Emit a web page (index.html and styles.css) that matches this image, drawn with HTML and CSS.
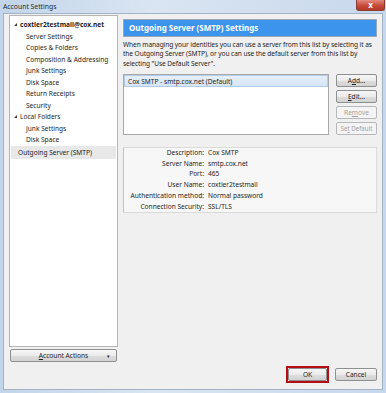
FILE: index.html
```html
<!DOCTYPE html>
<html lang="en">
<head>
  <meta charset="utf-8">
  <title>Account Settings</title>
  <link rel="stylesheet" href="styles.css">
</head>
<body>
  <div class="window">
    <div class="titlebar">
      <span class="title">Account Settings</span>
      <span class="close">x</span>
    </div>
    <div class="client">
      <div class="panes">
        <div class="sidebar">
          <ul class="tree">
            <li class="account"><span class="twisty"></span>coxtier2testmail@cox.net</li>
            <li class="child">Server Settings</li>
            <li class="child">Copies &amp; Folders</li>
            <li class="child">Composition &amp; Addressing</li>
            <li class="child">Junk Settings</li>
            <li class="child">Disk Space</li>
            <li class="child">Return Receipts</li>
            <li class="child">Security</li>
            <li class="folder"><span class="twisty"></span>Local Folders</li>
            <li class="child">Junk Settings</li>
            <li class="child">Disk Space</li>
            <li class="top selected">Outgoing Server (SMTP)</li>
          </ul>
          <button class="btn actions"><span><u>A</u>ccount Actions</span><span class="drop">&#9662;</span></button>
        </div>
        <div class="main">
          <div class="heading">Outgoing Server (SMTP) Settings</div>
          <p class="intro">When managing your identities you can use a server from this list by selecting it as the Outgoing Server (SMTP), or you can use the default server from this list by selecting "Use Default Server".</p>
          <div class="servers">
            <div class="list">
              <div class="row selected">Cox SMTP - smtp.cox.net (Default)</div>
            </div>
            <div class="side-buttons">
              <button class="btn">A<u>d</u>d...</button>
              <button class="btn"><u>E</u>dit...</button>
              <button class="btn" disabled>Re<u>m</u>ove</button>
              <button class="btn tight" disabled>Se<u>t</u> Default</button>
            </div>
          </div>
          <dl class="details">
            <dt>Description:</dt><dd>Cox SMTP</dd>
            <dt>Server Name:</dt><dd>smtp.cox.net</dd>
            <dt>Port:</dt><dd>465</dd>
            <dt>User Name:</dt><dd>coxtier2testmail</dd>
            <dt>Authentication method:</dt><dd>Normal password</dd>
            <dt>Connection Security:</dt><dd>SSL/TLS</dd>
          </dl>
        </div>
      </div>
      <div class="footer">
        <span class="focus"><button class="btn ok">OK</button></span>
        <button class="btn cancel">Cancel</button>
      </div>
    </div>
  </div>
</body>
</html>
```

FILE: styles.css
```css
body {
  margin: 0;
  background-color: #ffffff;
  font-family: "Noto Sans", "Open Sans", sans-serif;
  font-size: 6.6px;
  color: #1e1e1e;
}

.window {
  width: 386px;
  height: 393px;
  box-sizing: border-box;
  padding: 0 3px 3px 3px;
  background: linear-gradient(90deg, #c3d5ea, #d9e5f2 40%, #c8d8ec);
  display: flex;
  flex-direction: column;
}

.titlebar {
  height: 13px;
  display: flex;
  align-items: flex-start;
  justify-content: space-between;
}

.title {
  margin-top: 2px;
  font-size: 6.8px;
  color: #2a2a2a;
}

.close {
  width: 27px;
  height: 10px;
  margin-right: -2px;
  border: 1px solid #8a3a33;
  border-top: none;
  border-radius: 0 0 3px 3px;
  background: linear-gradient(#e08a7e, #c84a38 55%, #b63a28);
  color: #ffffff;
  font-weight: bold;
  font-size: 8px;
  line-height: 9px;
  text-align: center;
}

.client {
  flex: 1;
  background-color: #f0f0f0;
  border: 1px solid #a3b3c6;
  padding: 1px 5px 0 5px;
  display: flex;
  flex-direction: column;
}

.panes {
  display: flex;
  gap: 5px;
}

.sidebar {
  width: 109px;
  display: flex;
  flex-direction: column;
  gap: 2px;
}

.tree {
  list-style: none;
  margin: 0;
  padding: 3px 1px 0 1px;
  height: 332px;
  box-sizing: border-box;
  background-color: #ffffff;
  border: 1px solid #b5b5b5;
}

.tree li {
  height: 11.5px;
  line-height: 11.5px;
  white-space: nowrap;
}

.tree .account,
.tree .folder {
  padding-left: 3px;
}

.tree .account {
  font-weight: bold;
}

.tree .child {
  padding-left: 15px;
}

.tree .top {
  padding-left: 7px;
}

.tree .selected {
  background-color: #e8e8e8;
  height: 13px;
  line-height: 13px;
}

.twisty {
  display: inline-block;
  width: 0;
  height: 0;
  margin-right: 3px;
  border-left: 3px solid transparent;
  border-bottom: 3px solid #3a3a3a;
  vertical-align: 1px;
}

.btn {
  font-family: inherit;
  font-size: 6.6px;
  color: #1e1e1e;
  height: 13px;
  padding: 0;
  white-space: nowrap;
  border: 1px solid #8e8f8f;
  border-radius: 2px;
  background: linear-gradient(#f6f6f6, #ebebeb 50%, #dddddd 51%, #d3d3d3);
}

.btn:disabled {
  color: #a2a2a2;
  border-color: #b5b7b9;
  background: #f4f4f4;
}

.btn.tight {
  font-size: 6.2px;
}

.actions {
  margin: 0 1px;
  display: flex;
  align-items: center;
  justify-content: center;
  position: relative;
}

.drop {
  position: absolute;
  right: 6px;
  font-size: 5px;
}

.main {
  flex: 1;
  padding-top: 4px;
}

.heading {
  height: 18px;
  box-sizing: border-box;
  background-color: #3d94ec;
  border: 1px solid #9aa7b5;
  color: #ffffff;
  font-weight: bold;
  font-size: 8px;
  line-height: 16px;
  padding-left: 5px;
}

.intro {
  margin: 3px 0 0 0;
  line-height: 9.3px;
  letter-spacing: -0.08px;
}

.servers {
  display: flex;
  gap: 7px;
  margin-top: 6px;
}

.list {
  flex: 1;
  height: 61px;
  box-sizing: border-box;
  background-color: #ffffff;
  border: 1px solid #a8a8a8;
}

.list .row {
  height: 12px;
  line-height: 11px;
  box-sizing: border-box;
  padding-left: 3px;
}

.list .selected {
  background: linear-gradient(#e6effa, #d6e5f7);
  border: 1px solid #b3cde9;
}

.side-buttons {
  width: 41px;
  display: flex;
  flex-direction: column;
  gap: 3px;
}

.details {
  margin: 12px 0 0 0;
  height: 66px;
  box-sizing: border-box;
  background-color: #f7f7f7;
  border: 1px solid #dadada;
  border-left-color: #c4c4c4;
  display: grid;
  grid-template-columns: 80px auto;
  column-gap: 4px;
  align-content: start;
}

.details dt,
.details dd {
  margin: 0;
  line-height: 10.8px;
}

.details dt {
  text-align: right;
}

.footer {
  display: flex;
  justify-content: flex-end;
  align-items: center;
  gap: 6px;
  margin-top: 4px;
}

.focus {
  display: flex;
  border: 2px solid #b50d12;
}

.ok {
  width: 39px;
  height: 13px;
}

.cancel {
  width: 42px;
  height: 13px;
}
```
